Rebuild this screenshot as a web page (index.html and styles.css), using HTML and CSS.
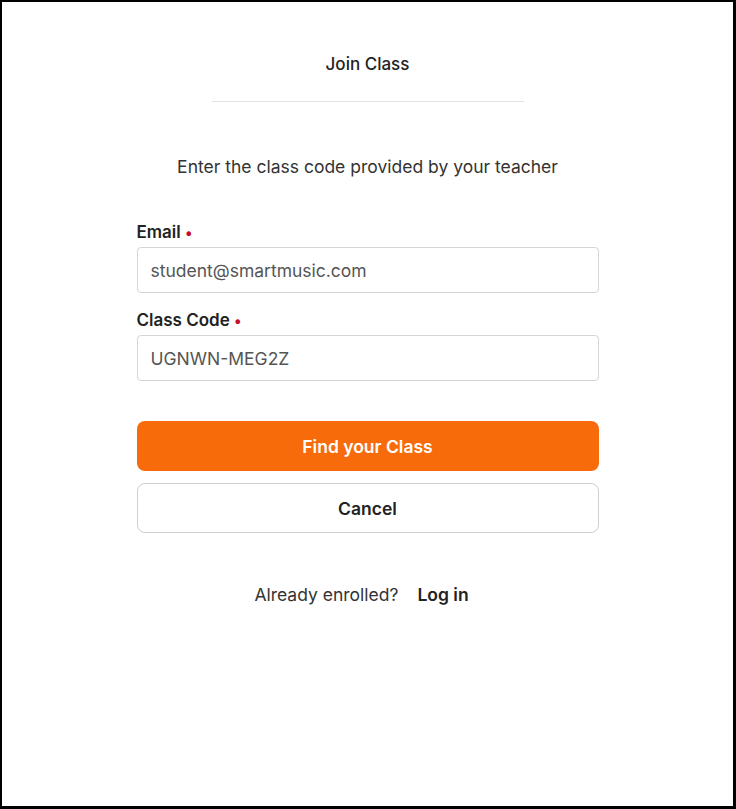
FILE: index.html
```html
<!DOCTYPE html>
<html lang="en">
<head>
    <meta charset="UTF-8">
    <meta name="viewport" content="width=device-width, initial-scale=1.0">
    <title>Join Class</title>
    <link rel="stylesheet" href="styles.css">
</head>
<body>

    <div class="frame">
        <header class="modal-header">
            <h1>Join Class</h1>
        </header>

        <p class="intro">Enter the class code provided by your teacher</p>

        <form class="join-form">
            <div class="field">
                <label for="email">Email <span class="required">&bull;</span></label>
                <input id="email" type="text" value="student@smartmusic.com">
            </div>
            <div class="field">
                <label for="code">Class Code <span class="required">&bull;</span></label>
                <input id="code" type="text" value="UGNWN-MEG2Z">
            </div>

            <div class="actions">
                <button type="button" class="btn btn-primary">Find your Class</button>
                <button type="button" class="btn btn-secondary">Cancel</button>
            </div>
        </form>

        <div class="login">
            <span>Already enrolled?</span>
            <a href="#">Log in</a>
        </div>
    </div>

</body>
</html>
```

FILE: styles.css
```css
html, body {
    height: 100%;
}
body {
    margin: 0;
    font-family: 'Inter', 'Liberation Sans', sans-serif;
    color: #333;
    background: #fff;
}
.frame {
    box-sizing: border-box;
    height: 100%;
    border: 2px solid #000;
    border-right-width: 3px;
    border-bottom-width: 3px;
    display: flex;
    flex-direction: column;
    align-items: center;
}
.modal-header {
    width: 312px;
    margin-top: 51px;
    padding-bottom: 26px;
    border-bottom: 1px solid #e3e3e3;
    text-align: center;
}
h1 {
    margin: 0;
    font-size: 17px;
    font-weight: 500;
    line-height: 22px;
    color: #222;
}
.intro {
    margin: 53px 0 0;
    font-size: 17.5px;
    line-height: 24px;
    color: #333;
}
.join-form {
    width: 462px;
    margin-top: 42px;
}
.field {
    display: flex;
    flex-direction: column;
    gap: 3px;
    margin-bottom: 16px;
}
.field label {
    font-size: 17px;
    font-weight: 600;
    line-height: 22px;
    color: #222;
}
.required {
    color: #c8102e;
    font-size: 15px;
}
.field input {
    box-sizing: border-box;
    height: 46px;
    padding: 0 13px;
    border: 1px solid #d6d6d6;
    border-radius: 4px;
    font-family: inherit;
    font-size: 17.5px;
    color: #555;
    outline: none;
}
.actions {
    display: flex;
    flex-direction: column;
    gap: 12px;
    margin-top: 40px;
}
.btn {
    height: 50px;
    border-radius: 8px;
    font-family: inherit;
    font-size: 17.5px;
    font-weight: 600;
    cursor: pointer;
}
.btn-primary {
    border: none;
    background: #f76b0b;
    color: #fff;
}
.btn-secondary {
    border: 1px solid #cfcfcf;
    background: #fff;
    color: #222;
}
.login {
    margin-top: 50px;
    font-size: 17.5px;
    line-height: 24px;
    display: flex;
    gap: 19px;
}
.login a {
    padding-right: 12px;
    color: #222;
    font-weight: 600;
    text-decoration: none;
}
```
